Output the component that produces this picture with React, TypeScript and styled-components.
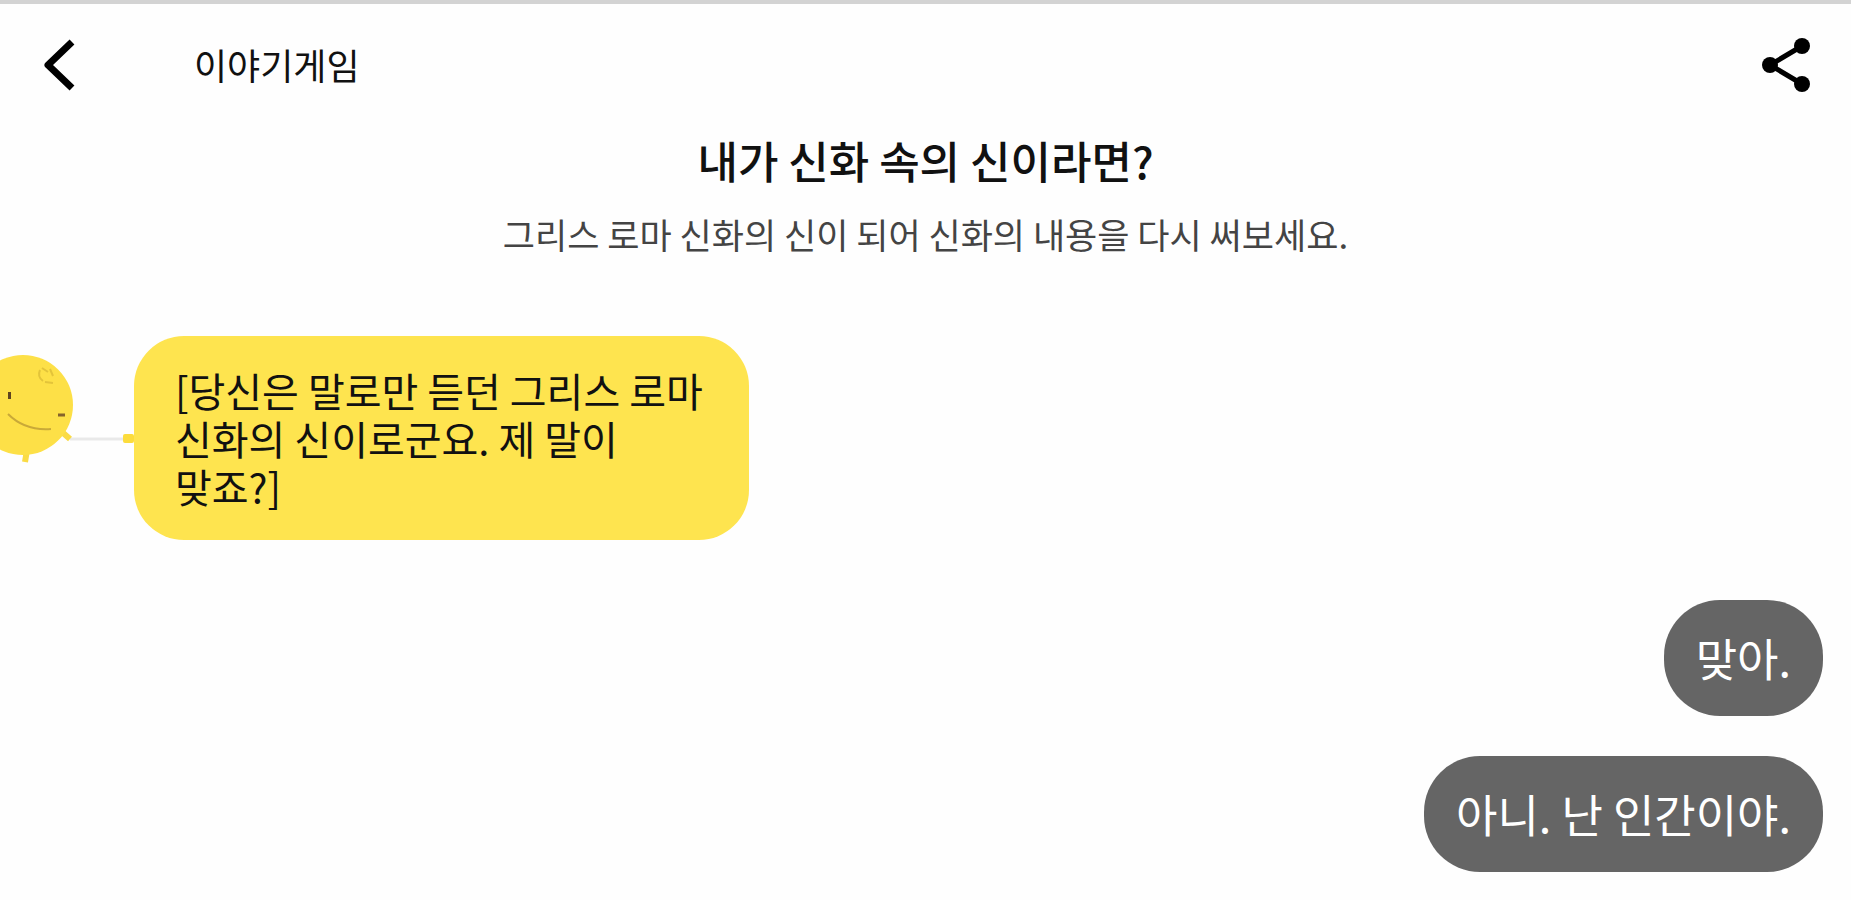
import React from "react";
import styled, { createGlobalStyle } from "styled-components";

const GlobalStyle = createGlobalStyle`
  * { box-sizing: border-box; }
  body {
    margin: 0;
    background: #fefefe;
    color: #111;
    font-family: "Noto Sans CJK KR", "Noto Sans", sans-serif;
    word-break: keep-all;
    overflow-x: hidden;
  }
`;

const Page = styled.div`
  border-top: 4px solid #d3d3d3;
`;

const Header = styled.header`
  display: flex;
  align-items: center;
  height: 122px;
  padding: 0 36px 0 40px;
`;

const IconButton = styled.button`
  display: flex;
  padding: 0;
  border: 0;
  background: none;
  color: #000;
  cursor: pointer;
`;

const HeaderTitle = styled.span`
  flex: 1;
  margin-left: 116px;
  padding-bottom: 2px;
  font-size: 36px;
  line-height: 48px;
`;

const Intro = styled.section`
  display: flex;
  flex-direction: column;
  align-items: center;
  gap: 20px;
  padding: 4px 24px 0;
  text-align: center;
`;

const Title = styled.h1`
  margin: 0;
  font-size: 44px;
  font-weight: 500;
  line-height: 60px;
`;

const Description = styled.p`
  margin: 0;
  color: #444;
  font-size: 35px;
  line-height: 48px;
`;

const Chat = styled.main`
  padding: 78px 28px 24px 0;
`;

const BotRow = styled.div`
  display: flex;
  align-items: flex-start;
`;

const Avatar = styled.svg`
  flex: none;
  margin-top: 12px;
`;

const BotBubble = styled.p`
  max-width: 615px;
  margin: 0;
  padding: 30px 28px 30px 41px;
  border-radius: 50px;
  background: #fee44f;
  font-size: 40px;
  line-height: 48px;
`;

const Replies = styled.div`
  display: flex;
  flex-direction: column;
  align-items: flex-end;
  gap: 40px;
  margin-top: 60px;
`;

const Reply = styled.button`
  padding: 28px 32px;
  border: 0;
  border-radius: 56px;
  background: #656565;
  color: #fff;
  font-family: inherit;
  font-size: 45px;
  line-height: 60px;
  cursor: pointer;
`;

const replies = ["맞아.", "아니. 난 인간이야."];

export default function App() {
  return (
    <Page>
      <GlobalStyle />
      <Header>
        <IconButton aria-label="뒤로">
          <svg width="38" height="56" viewBox="0 0 38 56" fill="none" stroke="currentColor" strokeWidth="7">
            <path d="M32 5 L8 28 L32 51" strokeLinejoin="round" />
          </svg>
        </IconButton>
        <HeaderTitle>이야기게임</HeaderTitle>
        <IconButton aria-label="공유">
          <svg width="54" height="56" viewBox="0 0 54 56" fill="currentColor">
            <path d="M41 9 L9 28 L41 47" fill="none" stroke="currentColor" strokeWidth="5" />
            <circle cx="41" cy="9" r="8" />
            <circle cx="9" cy="28" r="8" />
            <circle cx="41" cy="47" r="8" />
          </svg>
        </IconButton>
      </Header>
      <Intro>
        <Title>내가 신화 속의 신이라면?</Title>
        <Description>그리스 로마 신화의 신이 되어 신화의 내용을 다시 써보세요.</Description>
      </Intro>
      <Chat>
        <BotRow>
          <Avatar width="134" height="120" viewBox="0 0 134 120" aria-hidden="true">
            <path d="M70 91H128" stroke="#e9e9e9" strokeWidth="3" />
            <path d="M27 102 L25 114 M62 84 L70 91" stroke="#fadb45" strokeWidth="6" />
            <rect x="123" y="86" width="11" height="9" rx="2" fill="#fcdc3c" />
            <circle cx="23" cy="57" r="50" fill="#fde047" />
            <g fill="none" stroke="#e3c43a" strokeWidth="2">
              <path d="M40 22 Q37 29 43 33 M42 20 L48 24 M50 21 L53 28 M45 34 L53 35" />
              <path d="M8 66 Q25 83 51 81" stroke="#c9a938" />
            </g>
            <rect x="8" y="44" width="3" height="7" fill="#5e4420" />
            <path d="M58 67 L65 67" stroke="#85632b" strokeWidth="3" />
          </Avatar>
          <BotBubble>[당신은 말로만 듣던 그리스 로마 신화의 신이로군요. 제 말이 맞죠?]</BotBubble>
        </BotRow>
        <Replies>
          {replies.map((text) => (
            <Reply key={text}>{text}</Reply>
          ))}
        </Replies>
      </Chat>
    </Page>
  );
}
